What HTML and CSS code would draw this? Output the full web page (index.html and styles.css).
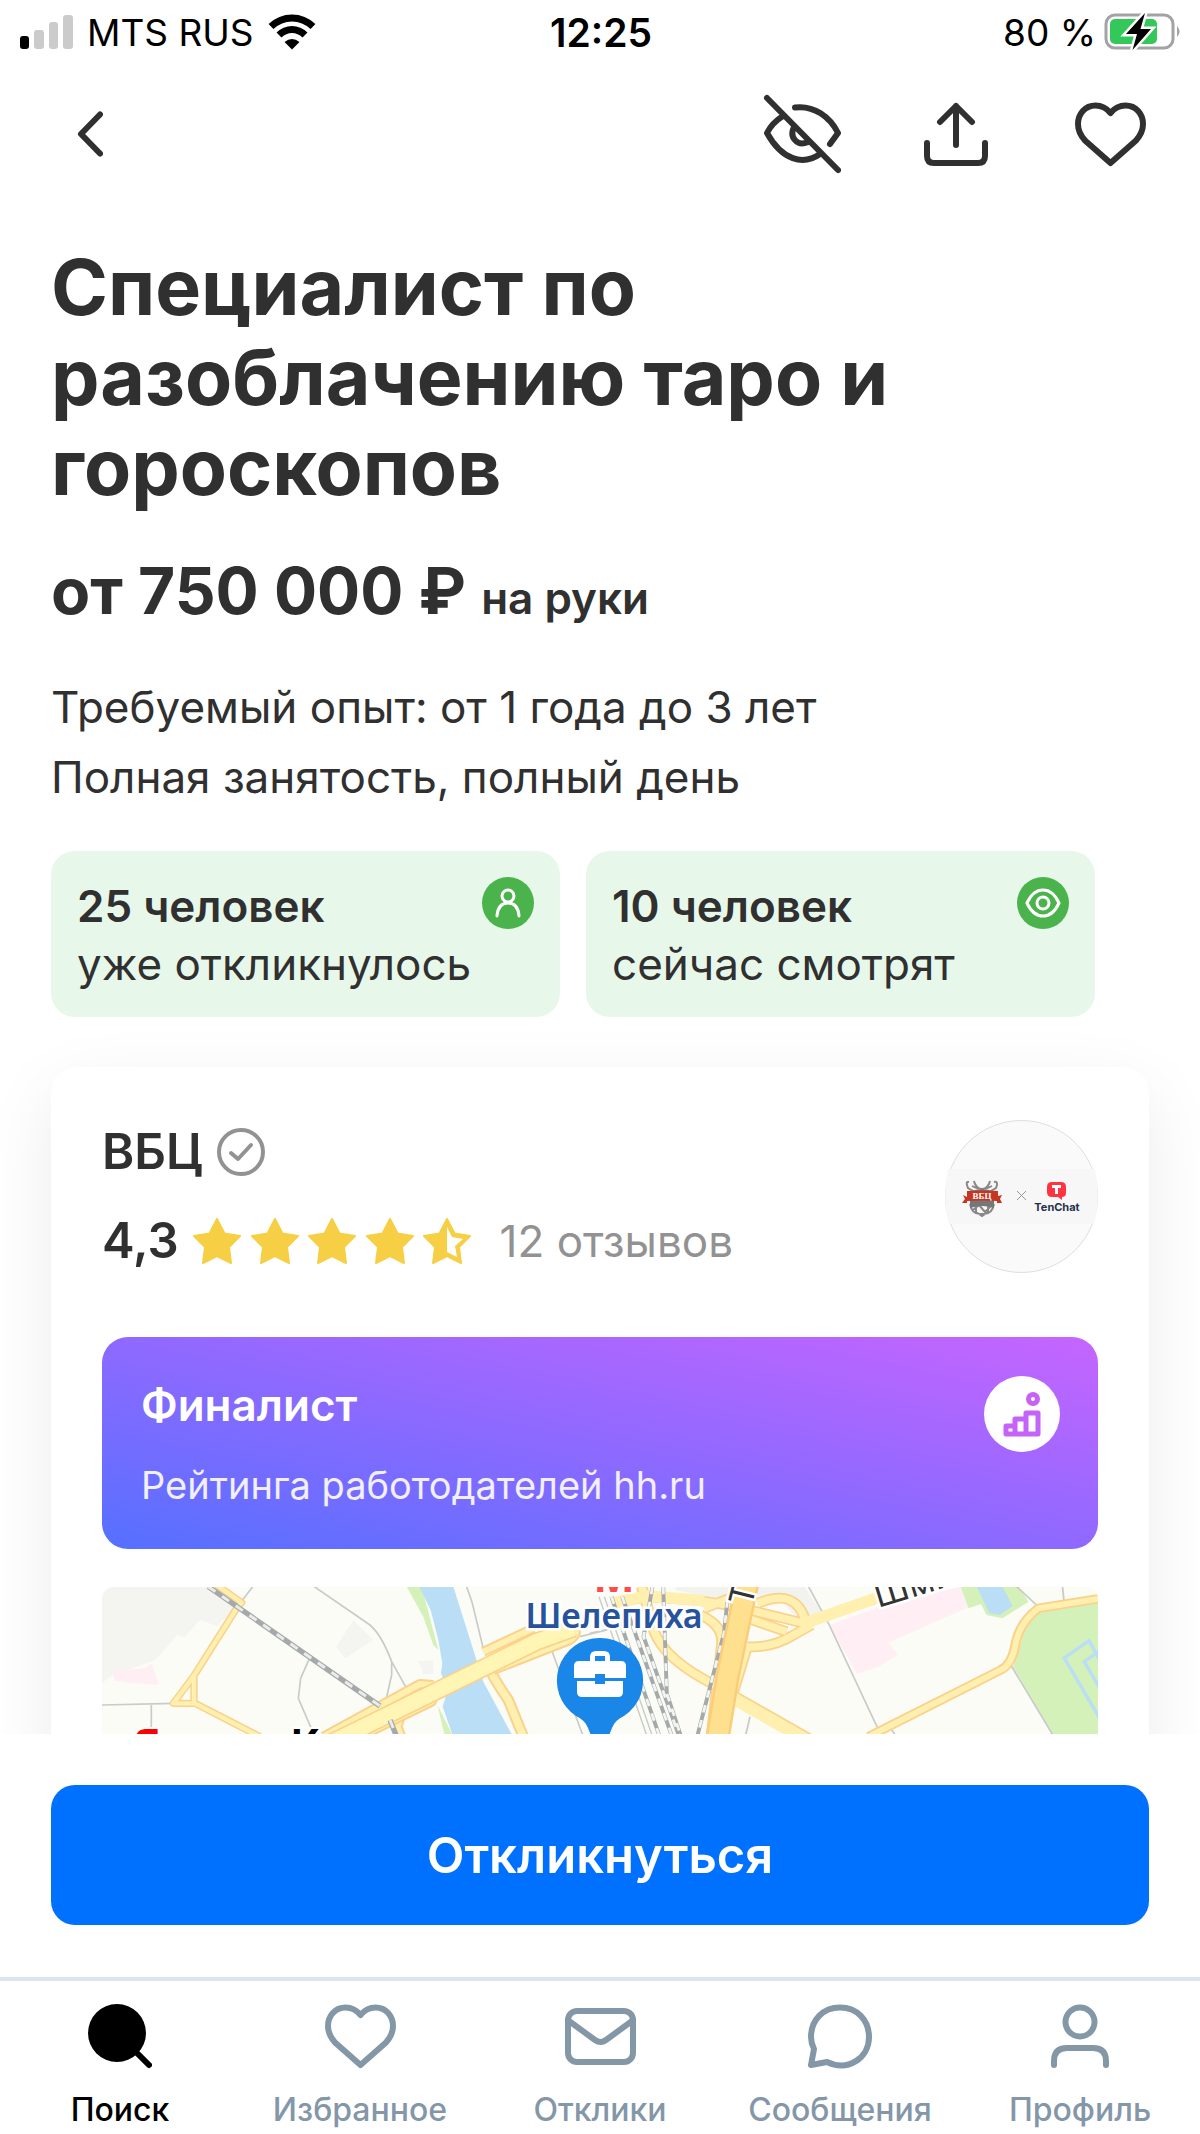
FILE: index.html
```html
<!DOCTYPE html>
<html lang="ru">
<head>
<meta charset="utf-8">
<meta name="viewport" content="width=device-width, initial-scale=1">
<title>Специалист по разоблачению таро и гороскопов</title>
<link rel="stylesheet" href="styles.css">
</head>
<body>
<div class="app">
  <div class="status">
    <div class="status-left">
      <svg width="53" height="35" viewBox="0 0 53 35" aria-hidden="true">
        <rect x="0" y="21" width="9" height="13" rx="3"/>
        <g fill="#cbcbcb"><rect x="14" y="15" width="10" height="19" rx="3"/><rect x="29" y="7" width="9" height="27" rx="3"/><rect x="43" y="0" width="10" height="34" rx="3"/></g>
      </svg>
      <span>MTS RUS</span>
      <svg width="48" height="36" viewBox="0 0 48 36" fill="none" stroke="#000" aria-hidden="true">
        <path d="M3 12.500C15 1 33 1 45 12.500" stroke-width="7"/>
        <path d="M11 21C18.500 13.500 29.500 13.500 37 21" stroke-width="7"/>
        <path d="M24 35.500L16.500 28Q24 22 31.500 28Z" fill="#000" stroke="none"/>
      </svg>
    </div>
    <time class="status-time">12:25</time>
    <div class="status-right">
      <span>80 %</span>
      <svg width="78" height="38" viewBox="0 0 78 38" aria-hidden="true">
        <rect x="2" y="2" width="67" height="33" rx="9" fill="none" stroke="#a3a3a3" stroke-width="3"/>
        <path d="M73 13q5 5.500 0 11z" fill="#a3a3a3"/>
        <rect x="6" y="6" width="47" height="25" rx="5" fill="#34c759"/>
        <path d="M41 0L22 21H33L28.500 37L47 16H36.500Z" stroke="#fff" stroke-width="5" paint-order="stroke"/>
      </svg>
    </div>
  </div>

  <header class="toolbar">
    <button class="tool" type="button" aria-label="Назад">
      <svg width="26" height="46" viewBox="0 0 26 46"><path d="M23 3.500L4 23L23 42.500"/></svg>
    </button>
    <div class="tool-group">
      <button class="tool" type="button" aria-label="Скрыть">
        <svg width="78" height="80" viewBox="0 0 78 80"><path d="M4 4L75 76M32 13.500C51 11 67 23 75 39L67 50M20 22C12 27 7 33 4 39C19 66 40 72 57 60M31 33C26 43 34 53 45 48"/></svg>
      </button>
      <button class="tool" type="button" aria-label="Поделиться">
        <svg width="64" height="65" viewBox="0 0 64 65"><path d="M3 41V54Q3 61 10 61H54Q61 61 61 54V41M32 43V4M16 20L32 4L48 20"/></svg>
      </button>
      <button class="tool" type="button" aria-label="В избранное">
        <svg width="71" height="65" viewBox="0 0 71 65"><path d="M35.500 11C31 5.500 26 3.500 20.500 3.500C10 3.500 3 12 3 22C3 29 6 34 10 38.500L35.500 61L61 38.500C65 34 68 29 68 22C68 12 61 3.500 50.500 3.500C45 3.500 40 5.500 35.500 11Z"/></svg>
      </button>
    </div>
  </header>

  <main class="content">
    <h1 class="title">Специалист по разоблачению таро и гороскопов</h1>
    <p class="salary">от 750 000 ₽ <small>на руки</small></p>
    <p class="terms">Требуемый опыт: от 1 года до 3 лет<br>Полная занятость, полный день</p>

    <div class="stats">
      <div class="stat">
        <p><strong>25 человек</strong><br>уже откликнулось</p>
        <svg class="stat-icon" viewBox="0 0 52 52" aria-hidden="true"><circle cx="26" cy="26" r="26" fill="#4bb34b" stroke="none"/><circle cx="26" cy="19" r="6"/><path d="M15 39Q16 26 26 26Q36 26 37 39"/></svg>
      </div>
      <div class="stat">
        <p><strong>10 человек</strong><br>сейчас смотрят</p>
        <svg class="stat-icon" viewBox="0 0 52 52" aria-hidden="true"><circle cx="26" cy="26" r="26" fill="#4bb34b" stroke="none"/><circle cx="26" cy="26" r="6"/><path d="M10 26Q16 13 26 13Q36 13 42 26Q36 39 26 39Q16 39 10 26Z"/></svg>
      </div>
    </div>

    <section class="card">
      <div class="company">
        <div>
          <h2 class="company-name">ВБЦ
            <svg width="48" height="48" viewBox="0 0 48 48" fill="none" stroke="#929292" stroke-width="4" stroke-linecap="round" stroke-linejoin="round" aria-hidden="true"><circle cx="24" cy="24" r="22"/><path d="M14 25L21 31L34 17"/></svg>
          </h2>
          <div class="rating">
            <b>4,3</b>
            <svg class="stars" width="279" height="46" viewBox="0 0 279 46" aria-hidden="true">
              <defs><path id="star" d="M24 1L31.500 15.500L47 18L36 29L38 45L24 38L10 45L12 29L1 18L16.500 15.500Z"/></defs>
              <use href="#star"/><use href="#star" x="58"/><use href="#star" x="115"/><use href="#star" x="173"/><use href="#star" x="230"/>
              <path d="M254 9L259 19L270 21L262 28L264 39L254 34Z" fill="#fff" stroke="none"/>
            </svg>
            <a class="reviews" href="#reviews">12 отзывов</a>
          </div>
        </div>
        <svg class="logo" viewBox="0 0 153 153" role="img" aria-label="ВБЦ и TenChat">
          <circle cx="76.500" cy="76.500" r="76" fill="#fafafa" stroke="#dedede"/>
          <path d="M3 49H150Q156 77 149 104H4Q-3 77 3 49Z" fill="#f7f7f7"/>
          <g fill="none" stroke="#888" stroke-width="2">
            <path d="M24 62Q20 61 23 68L37 76L51 68Q54 61 49 62M29 61Q30 67 37 70Q44 67 45 61M27 66Q37 72 47 66" />
            <path d="M25 84Q27 95 37 94Q47 95 49 84M31 84V92L37 96L43 92V84M28 90L34 85L40 92L46 86"/>
          </g>
          <path d="M25 72Q37 66 49 72V88Q37 84 25 88Z" fill="#777"/>
          <path d="M18 75L22 77V71Q37 70 53 71V76L57 75L55 79L57 83H52V81Q37 80 22 81V83H17L20 79Z" fill="#c53522"/>
          <text x="37" y="79" class="logo-mark">ВБЦ</text>
          <path d="M72 71L81 80M81 71L72 80" stroke="#999" fill="none"/>
          <path d="M107 62H116Q121 62 121 67V73Q121 77 117 77V80L113 77H107Q102 77 102 72V67Q102 62 107 62Z" fill="#ff3440"/>
          <path d="M107 65H116V68H113V74H110V68H107Z" fill="#fff"/>
          <text x="112" y="91" class="logo-name">TenChat</text>
        </svg>
      </div>

      <div class="award">
        <div>
          <h3>Финалист</h3>
          <p>Рейтинга работодателей hh.ru</p>
        </div>
        <svg width="76" height="76" viewBox="0 0 76 76" fill="none" stroke="#c562f7" stroke-width="5" stroke-linejoin="round" aria-hidden="true">
          <circle cx="38" cy="38" r="38" fill="#fff" stroke="none"/>
          <circle cx="49" cy="23" r="4.500"/>
          <path d="M22 58V50H31V43H42V37H54V58ZM31 50V58M42 43V58"/>
        </svg>
      </div>

      <svg class="map" viewBox="102 1587 996 300" preserveAspectRatio="xMidYMin slice" role="img" aria-label="Карта: Шелепиха">
        <rect x="102" y="1587" width="996" height="300" fill="#fbfcf6"/>
        <g transform="translate(90 1570) scale(.33333)" fill="none">
          <path d="M30 50H370L440 110L380 168L330 150L285 200L262 195L195 270L60 320L30 345Z" fill="#f4f4f1"/>
          <path d="M72 302L165 295L186 280L206 345L130 340L72 332Z" fill="#ffeff5"/>
          <path d="M790 150L850 210L765 265L738 230ZM985 272H1030V312H1000Z" fill="#f4f4f1"/>
          <path d="M950 50H995L1045 240L1030 225L1000 140ZM1042 405L1100 520H1070Z" fill="#d4f1b9"/>
          <path d="M988 50H1090L1150 240L1180 335L1285 530H1100L1058 410L1073 360L1053 310L1057 280L1045 210L1022 120Z" fill="#b9def5"/>
          <g stroke="#c9cbc9" stroke-width="5">
            <path d="M35 405L250 400M184 405V480M490 48L450 100M670 48L840 165Q875 195 905 275L948 352M905 275V315L888 390M660 262L632 325L625 385L668 485M1130 50L1147 100L1182 245M1385 240L1410 310L1480 500M1470 200L1550 180"/>
          </g>
          <g stroke-linejoin="round">
            <path d="M380 45L455 98L440 115L310 320L250 400H315L510 500M312 318V400" stroke="#fad28b" stroke-width="22"/>
            <path d="M380 45L455 98L440 115L310 320L250 400H315L510 500M312 318V400" stroke="#fff0b0" stroke-width="13"/>
            <path d="M1200 300Q1220 340 1255 390L1300 500M930 440L920 470L940 520" stroke="#fad28b" stroke-width="34"/>
            <path d="M1200 300Q1220 340 1255 390L1300 500M930 440L920 470L940 520" stroke="#fff0b0" stroke-width="22"/>
            <path d="M700 500L990 342L1030 345M800 505L1025 395L1040 360M1180 245L1330 175M1210 300L1440 210Q1480 180 1430 170" stroke="#fad28b" stroke-width="30"/>
            <path d="M700 500L990 342L1030 345M800 505L1025 395L1040 360M1180 245L1330 175M1210 300L1440 210Q1480 180 1430 170" stroke="#fff0b0" stroke-width="18"/>
            <path d="M720 520L1340 215L1450 175" stroke="#fad28b" stroke-width="56"/>
            <path d="M720 520L1340 215L1450 175" stroke="#fff5b5" stroke-width="46"/>
          </g>
          <path d="M355 50L870 408M900 450L920 500" stroke="#a5a9aa" stroke-width="16"/>
          <path d="M355 50L870 408M900 450L920 500" stroke="#ebecea" stroke-width="9" stroke-dasharray="26 24"/>
        </g>
        <g transform="translate(590 1570) scale(.35714 .33333)" fill="none">
          <path d="M240 50H600L650 130L590 160L520 70L390 95L240 60Z" fill="#f2f2ee"/>
          <path d="M670 165L840 100L1040 50L1060 112L835 218L862 255L805 292L748 312Z" fill="#ffeff5"/>
          <path d="M1038 50H1200L1228 95L1155 145L1110 135L1095 102L1060 115ZM1260 125L1430 95V520H1310L1185 290L1220 170Z" fill="#d4f1b9"/>
          <path d="M1083 50H1155L1183 108L1148 135L1118 130Z" fill="#b9def5"/>
          <path d="M1430 275L1397 212L1328 264L1430 450M1430 240L1384 275L1430 360" stroke="#b9def5" stroke-width="10"/>
          <path d="M612 50L670 165L808 480M1195 50L1250 105M1323 50L1327 92M1180 288L1310 520M448 440L435 500M845 480L865 510M0 190L50 178" stroke="#c9cbc9" stroke-width="5"/>
          <g stroke-linejoin="round">
            <path d="M60 100L160 80L310 92L410 110L600 160L800 85M145 50L180 185Q210 270 350 345L620 510M310 135Q370 165 370 215L340 500M470 100Q580 50 605 160M455 150L550 185M440 230Q510 235 570 195L620 165M440 230L400 370M320 115L390 85" stroke="#fad28b" stroke-width="32"/>
            <path d="M60 100L160 80L310 92L410 110L600 160L800 85M145 50L180 185Q210 270 350 345L620 510M310 135Q370 165 370 215L340 500M470 100Q580 50 605 160M455 150L550 185M440 230Q510 235 570 195L620 165M440 230L400 370M320 115L390 85" stroke="#fff0b0" stroke-width="22"/>
            <path d="M600 160L800 85M65 98L160 78L320 92M390 380L620 520" stroke="#fff0b0" stroke-width="34"/>
            <path d="M780 500L1150 300Q1180 285 1190 230Q1200 160 1255 115L1430 85" stroke="#fad28b" stroke-width="28"/>
            <path d="M780 500L1150 300Q1180 285 1190 230Q1200 160 1255 115L1430 85" stroke="#fff0b0" stroke-width="17"/>
          </g>
          <path d="M25 80L160 500M40 80L175 500" stroke="#c9cbc9" stroke-width="4"/>
          <g stroke="#a5a9aa" stroke-width="11">
            <path d="M60 80L195 500M90 80L230 500M175 50L150 200L250 500M205 50L215 370L255 500M385 90L375 190L300 500"/>
            <path d="M60 80L195 500M90 80L230 500M175 50L150 200L250 500M205 50L215 370L255 500M385 90L375 190L300 500" stroke="#f3f4f1" stroke-width="8" stroke-dasharray="23 23"/>
          </g>
          <path d="M440 40L385 320L355 520" stroke="#fbcd78" stroke-width="68"/>
          <path d="M440 40L385 320L355 520" stroke="#ffe08f" stroke-width="54"/>
        </g>
        <text x="614" y="1592" class="map-metro">М</text>
        <text x="614" y="1628" class="map-station">Шелепиха</text>
        <text transform="translate(754 1597) rotate(-76)" class="map-street map-street-turned">Т</text>
        <text transform="translate(878 1608) rotate(-17)" class="map-street">Шмитовский</text>
        <text x="134" y="1758" class="map-brand"><tspan fill="#f00">Я</tspan>ндекс Карты</text>
        <path d="M600 1638A42.500 42.500 0 0 1 624 1716Q615 1720 612 1728L600 1758L588 1728Q585 1720 576 1716A42.500 42.500 0 0 1 600 1638Z" fill="#1a86e8"/>
        <path d="M580 1661H590V1657Q590 1651 596 1651H604Q610 1651 610 1657V1661H621Q626 1661 626 1666V1678H605V1674H595V1678H574V1666Q574 1661 579 1661ZM595 1661H605V1656H595ZM577 1681H595V1684H605V1681H623V1692Q623 1697 618 1697H582Q577 1697 577 1692Z" fill="#fff" fill-rule="evenodd"/>
      </svg>
    </section>
  </main>

  <footer class="bottom">
    <div class="action"><button class="apply" type="button">Откликнуться</button></div>
    <nav class="tabs">
      <a class="tab active" href="#search" aria-current="page">
        <svg width="64" height="65" viewBox="0 0 64 65"><circle cx="29" cy="29" r="29" fill="#000" stroke="none"/><path d="M48 48L61 61"/></svg>
        Поиск
      </a>
      <a class="tab" href="#favorites">
        <svg width="71" height="65" viewBox="0 0 71 65"><path d="M35.500 11C31 5.500 26 3.500 20.500 3.500C10 3.500 3 12 3 22C3 29 6 34 10 38.500L35.500 61L61 38.500C65 34 68 29 68 22C68 12 61 3.500 50.500 3.500C45 3.500 40 5.500 35.500 11Z"/></svg>
        Избранное
      </a>
      <a class="tab" href="#responses">
        <svg width="71" height="65" viewBox="0 0 71 65"><rect x="3" y="7" width="65" height="51" rx="9"/><path d="M4 17L30 36Q35.500 40 41 36L67 17"/></svg>
        Отклики
      </a>
      <a class="tab" href="#messages">
        <svg width="64" height="65" viewBox="0 0 64 65"><path d="M6 45L3 61L19 58C40 68 61 54 61 33C61 16 49 3.500 32 3.500C15 3.500 3 16 3 33Q3 39 6 45Z"/></svg>
        Сообщения
      </a>
      <a class="tab" href="#profile">
        <svg width="58" height="65" viewBox="0 0 58 65"><circle cx="29" cy="18" r="14.500"/><path d="M3 61V57Q3 44 16 44H42Q55 44 55 57V61"/></svg>
        Профиль
      </a>
    </nav>
  </footer>
</div>
</body>
</html>
```
FILE: styles.css
```css
* { box-sizing: border-box; }
body, h1, h2, h3, p { margin: 0; }
body {
  background: #fff;
  color: #303030;
  font-family: Inter, "Liberation Sans", sans-serif;
}
button { border: 0; font: inherit; cursor: pointer; }
a { text-decoration: none; }
svg { display: block; flex: none; }

.app {
  display: flex;
  flex-direction: column;
  height: 100vh;
  overflow: hidden;
}

/* phone status bar */
.status {
  display: grid;
  grid-template-columns: 1fr auto 1fr;
  align-items: center;
  flex: none;
  height: 64px;
  padding: 0 18px 0 20px;
  color: #000;
  font-size: 37px;
}
.status-left, .status-right { display: flex; align-items: center; }
.status-left { gap: 14px; }
.status-right { justify-content: flex-end; gap: 8px; }
.status-time { font-size: 39px; font-weight: 600; }

.toolbar {
  display: flex;
  justify-content: space-between;
  align-items: center;
  flex: none;
  height: 140px;
  padding: 0 51px;
}
.tool-group { display: flex; gap: 76px; }
.tool {
  display: flex;
  align-items: center;
  justify-content: center;
  width: 78px;
  height: 80px;
  padding: 0;
  background: none;
}
.tool svg, .tab svg {
  fill: none;
  stroke: #303030;
  stroke-width: 6;
  stroke-linecap: round;
  stroke-linejoin: round;
}

.content {
  flex: 1;
  min-height: 0;
  overflow: hidden;
  padding: 38px 51px 0;
}
.title {
  max-width: 900px;
  font-size: 77px;
  font-weight: 700;
  line-height: 90px;
}
.salary {
  margin-top: 40px;
  font-size: 64px;
  font-weight: 700;
  line-height: 78px;
}
.salary small { font-size: 44px; font-weight: 600; line-height: 44px; }
.terms {
  margin-top: 42px;
  font-size: 44px;
  line-height: 70px;
}

.stats {
  display: grid;
  grid-template-columns: 1fr 1fr;
  gap: 26px;
  margin: 39px 54px 0 0;
}
.stat {
  display: flex;
  justify-content: space-between;
  padding: 26px 26px 24px;
  border-radius: 24px;
  background: #e7f7ea;
  font-size: 44px;
  line-height: 58px;
  white-space: nowrap;
}
.stat strong { font-weight: 600; }
.stat-icon {
  width: 52px;
  height: 52px;
  margin-left: -52px;
  fill: none;
  stroke: #fff;
  stroke-width: 3;
  stroke-linecap: round;
}

.card {
  margin-top: 50px;
  padding: 53px 51px 51px;
  border-radius: 26px;
  background: #fff;
  box-shadow: 0 24px 72px rgba(0, 0, 0, .08);
}
.company {
  display: flex;
  justify-content: space-between;
  align-items: flex-start;
}
.company-name, .rating {
  display: flex;
  align-items: center;
  gap: 14px;
  font-size: 49px;
  font-weight: 600;
  line-height: 64px;
}
.rating { margin-top: 25px; }
.rating b { font-weight: 600; }
.stars { fill: #f6cf45; stroke: #f6cf45; stroke-width: 2; stroke-linejoin: round; }
.reviews {
  margin-left: 14px;
  color: #929292;
  font-size: 44px;
  font-weight: 400;
}
.logo { width: 153px; height: 153px; }
.logo text { text-anchor: middle; font-weight: 700; }
.logo .logo-mark { fill: #fff; font-family: "Liberation Serif", serif; font-size: 9px; }
.logo-name { fill: #27304a; font-size: 11px; }

.award {
  display: flex;
  justify-content: space-between;
  margin-top: 64px;
  padding: 39px 38px 36px 39px;
  border-radius: 26px;
  background: linear-gradient(to top right, #5570ff, #8f69ff 50%, #c665ff);
  color: #fff;
}
.award h3 { font-size: 44px; font-weight: 600; line-height: 58px; }
.award p { margin-top: 23px; color: #f2efff; font-size: 38px; line-height: 56px; }

.map {
  width: 100%;
  height: 300px;
  margin-top: 38px;
  border-radius: 12px;
}
.map text { font-family: "Noto Sans", sans-serif; stroke: #fff; paint-order: stroke; }
.map .map-station { fill: #26539c; font-size: 34px; font-weight: 600; text-anchor: middle; stroke-width: 5px; }
.map .map-metro { fill: #ff4b4b; font-size: 44px; font-weight: 700; text-anchor: middle; stroke-width: 4px; }
.map .map-street { fill: #333; font-size: 34px; stroke-width: 5px; }
.map .map-street-turned { text-anchor: middle; }
.map .map-brand { font-family: Inter, sans-serif; font-size: 40px; font-weight: 700; stroke-width: 4px; }

.bottom { flex: none; background: #fff; }
.action { padding: 51px 51px 52px; }
.apply {
  width: 100%;
  height: 140px;
  border-radius: 24px;
  background: #0070ff;
  color: #fff;
  font-size: 49px;
  font-weight: 600;
}
.tabs {
  display: grid;
  grid-template-columns: repeat(5, 1fr);
  border-top: 4px solid #dde5ed;
}
.tab {
  display: flex;
  flex-direction: column;
  align-items: center;
  gap: 21px;
  padding: 23px 0 4px;
  color: #8497a8;
  font-size: 32px;
  font-weight: 500;
  line-height: 40px;
}
.tab svg { stroke: #8497a6; }
.tab.active { color: #000; }
.tab.active svg { stroke: #000; }
```
